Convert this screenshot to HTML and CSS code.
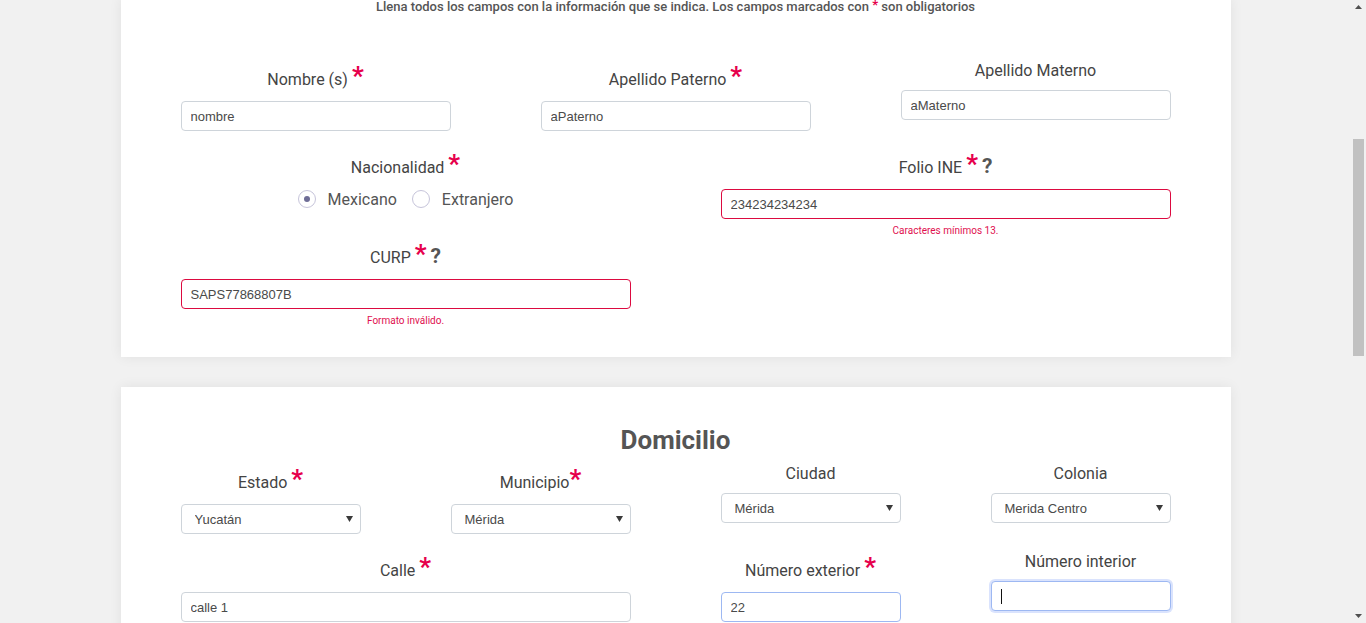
FILE: index.html
```html
<!DOCTYPE html>
<html lang="es">
<head>
<meta charset="utf-8">
<title>Registro</title>
<link rel="stylesheet" href="styles.css">
</head>
<body>
<div class="viewport">
  <main class="page">
    <section class="card card-first">
      <p class="intro">Llena todos los campos con la información que se indica. Los campos marcados con <span class="req req-small">*</span> son obligatorios</p>

      <div class="row cols-3">
        <div class="group">
          <label class="label">Nombre (s) <span class="req">*</span></label>
          <input class="field" type="text" value="nombre">
        </div>
        <div class="group">
          <label class="label">Apellido Paterno <span class="req">*</span></label>
          <input class="field" type="text" value="aPaterno">
        </div>
        <div class="group">
          <label class="label">Apellido Materno</label>
          <input class="field" type="text" value="aMaterno">
        </div>
      </div>

      <div class="row cols-2">
        <div class="group">
          <label class="label">Nacionalidad <span class="req">*</span></label>
          <div class="radios">
            <label class="radio"><input type="radio" name="nac" checked><span>Mexicano</span></label>
            <label class="radio"><input type="radio" name="nac"><span>Extranjero</span></label>
          </div>
        </div>
        <div class="group">
          <label class="label">Folio INE <span class="req">*</span> <span class="help">?</span></label>
          <input class="field invalid" type="text" value="234234234234">
          <div class="error">Caracteres mínimos 13.</div>
        </div>
      </div>

      <div class="row cols-2">
        <div class="group">
          <label class="label">CURP <span class="req">*</span> <span class="help">?</span></label>
          <input class="field invalid" type="text" value="SAPS77868807B">
          <div class="error">Formato inválido.</div>
        </div>
      </div>
    </section>

    <section class="card card-second">
      <h2 class="title">Domicilio</h2>

      <div class="row cols-4">
        <div class="group">
          <label class="label">Estado <span class="req">*</span></label>
          <div class="select-wrap">
            <select class="field select"><option>Yucatán</option></select>
            <svg class="arrow" width="7" height="6" viewBox="0 0 7 6"><path d="M0 0H7L3.5 6Z" fill="#3a3a3a"/></svg>
          </div>
        </div>
        <div class="group">
          <label class="label">Municipio<span class="req">*</span></label>
          <div class="select-wrap">
            <select class="field select"><option>Mérida</option></select>
            <svg class="arrow" width="7" height="6" viewBox="0 0 7 6"><path d="M0 0H7L3.5 6Z" fill="#3a3a3a"/></svg>
          </div>
        </div>
        <div class="group">
          <label class="label">Ciudad</label>
          <div class="select-wrap">
            <select class="field select"><option>Mérida</option></select>
            <svg class="arrow" width="7" height="6" viewBox="0 0 7 6"><path d="M0 0H7L3.5 6Z" fill="#3a3a3a"/></svg>
          </div>
        </div>
        <div class="group">
          <label class="label">Colonia</label>
          <div class="select-wrap">
            <select class="field select"><option>Merida Centro</option></select>
            <svg class="arrow" width="7" height="6" viewBox="0 0 7 6"><path d="M0 0H7L3.5 6Z" fill="#3a3a3a"/></svg>
          </div>
        </div>
      </div>

      <div class="row cols-4">
        <div class="group span-2">
          <label class="label">Calle <span class="req">*</span></label>
          <input class="field" type="text" value="calle 1">
        </div>
        <div class="group">
          <label class="label">Número exterior <span class="req">*</span></label>
          <input class="field focused" type="text" value="22">
        </div>
        <div class="group">
          <label class="label">Número interior</label>
          <div class="caret-wrap">
            <input class="field focused glow" type="text" value="">
          </div>
        </div>
      </div>
    </section>
  </main>

  <div class="scrollbar">
    <svg class="sb-arrow" width="7" height="4" viewBox="0 0 7 4"><path d="M0 4L3.5 0L7 4Z" fill="#505050"/></svg>
    <div class="sb-track"><div class="sb-thumb"></div></div>
    <svg class="sb-arrow" width="7" height="4" viewBox="0 0 7 4"><path d="M0 0H7L3.5 4Z" fill="#505050"/></svg>
  </div>
</div>
</body>
</html>
```

FILE: styles.css
```css
html, body {
  margin: 0;
  padding: 0;
  height: 623px;
  overflow: hidden;
  background: #f1f1f1;
  font-family: Roboto, "Liberation Sans", Arial, sans-serif;
  color: #444;
}

.viewport {
  display: flex;
  height: 623px;
}

.page {
  flex: 1;
  overflow: hidden;
}

.card {
  width: 1110px;
  box-sizing: border-box;
  margin: 0 auto;
  background: #fff;
  padding: 0 60px 46px;
  box-shadow: 0 0 12px rgba(0, 0, 0, 0.07);
}

.card-second {
  margin-top: 30px;
  padding-top: 38px;
  padding-bottom: 80px;
}

.intro {
  margin: -2px 0 47px;
  text-align: center;
  font-size: 13px;
  font-weight: 500;
  color: #555;
  line-height: 15px;
}

.req {
  color: #e6004c;
  font-weight: 700;
  font-size: 26px;
  line-height: normal;
}

.req-small {
  font-size: 13px;
  line-height: 1;
  vertical-align: 2px;
}

.help {
  color: #555;
  font-weight: 700;
  font-size: 21px;
  line-height: normal;
}

.row {
  display: grid;
  column-gap: 90px;
  align-items: start;
  margin-top: 18px;
}

.intro + .row,
.title + .row {
  margin-top: 0;
}

.cols-3 { grid-template-columns: repeat(3, 1fr); }
.cols-2 { grid-template-columns: repeat(2, 1fr); }
.cols-4 { grid-template-columns: repeat(4, 1fr); }
.span-2 { grid-column: span 2; }

.group {
  text-align: center;
  min-width: 0;
}

.label {
  display: block;
  font-size: 16px;
  line-height: normal;
  margin-bottom: 10px;
  color: #444;
}

.field {
  display: block;
  width: 100%;
  height: 30px;
  box-sizing: border-box;
  margin: 0;
  padding: 0 9px;
  border: 1px solid #ced4da;
  border-radius: 4px;
  background: #fff;
  font-family: "Liberation Sans", Arial, sans-serif;
  font-size: 13px;
  color: #4a4a4a;
  outline: none;
}

.field.invalid {
  border-color: #dc0a40;
}

.field.focused {
  border-color: #9db8f2;
}

.field.glow {
  box-shadow: 0 0 0 2px rgba(150, 175, 250, 0.35);
}

.caret-wrap {
  position: relative;
}

.caret-wrap::after {
  content: "";
  position: absolute;
  left: 10px;
  top: 8px;
  width: 1px;
  height: 15px;
  background: #111;
}

.error {
  margin: 4px 0 -17px;
  font-size: 10px;
  line-height: 15px;
  color: #e0104f;
}

.radios {
  display: flex;
  justify-content: center;
  align-items: center;
  height: 20px;
  gap: 15px;
}

.radio {
  display: flex;
  align-items: center;
  gap: 12px;
  font-size: 16px;
  color: #555;
}

.radio input {
  appearance: none;
  -webkit-appearance: none;
  margin: 0;
  width: 18px;
  height: 18px;
  box-sizing: border-box;
  border: 1px solid #c6c4da;
  border-radius: 50%;
  background: #fff;
  display: grid;
  place-content: center;
}

.radio input:checked::before {
  content: "";
  width: 6px;
  height: 6px;
  border-radius: 50%;
  background: #6e6d96;
}

.title {
  margin: 0 0 9px;
  text-align: center;
  font-size: 26px;
  font-weight: 700;
  color: #555;
  line-height: normal;
}

.select-wrap {
  position: relative;
}

.select {
  appearance: none;
  -webkit-appearance: none;
  padding-left: 13px;
  text-align: left;
}

.arrow {
  position: absolute;
  right: 8px;
  top: 12px;
}

.scrollbar {
  width: 15px;
  height: 623px;
  background: #f1f1f1;
  display: flex;
  flex-direction: column;
  align-items: center;
}

.sb-arrow {
  flex: none;
  margin: 5px 0;
}

.sb-track {
  flex: 1;
  width: 100%;
  box-sizing: border-box;
  padding: 125px 2px 0;
}

.sb-thumb {
  height: 217px;
  background: #c1c1c1;
}
```
